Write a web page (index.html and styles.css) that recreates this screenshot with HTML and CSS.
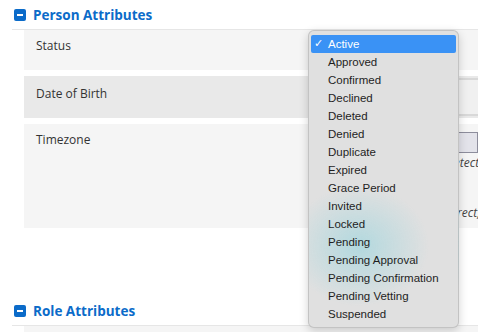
FILE: index.html
```html
<!DOCTYPE html>
<html>
<head>
    <title>Person Attributes</title>
    <link rel="stylesheet" href="styles.css">
</head>
<body>
    <div class="attr-section">
        <h2 class="section-title"><span class="toggle-icon"></span>Person Attributes</h2>
        <div class="attr-rows">
            <div class="attr-row">
                <div class="attr-label">Status</div>
                <div class="attr-value"></div>
            </div>
            <div class="attr-row dark">
                <div class="attr-label">Date of Birth</div>
                <div class="attr-value"><div class="date-input"></div></div>
            </div>
            <div class="attr-row tall">
                <div class="attr-label">Timezone</div>
                <div class="attr-value">
                    <div class="tz-input"></div>
                    <p class="help-text first">Your timezone will be detected automatically</p>
                    <p class="help-text second">If the value shown is incorrect, choose another</p>
                </div>
            </div>
        </div>
    </div>

    <div class="attr-section last">
        <h2 class="section-title"><span class="toggle-icon"></span>Role Attributes</h2>
        <div class="attr-rows">
            <div class="attr-row stub"></div>
        </div>
    </div>

    <!-- Native select popup, open over the Status field -->
    <ul class="select-menu">
        <li class="selected">Active</li>
        <li>Approved</li>
        <li>Confirmed</li>
        <li>Declined</li>
        <li>Deleted</li>
        <li>Denied</li>
        <li>Duplicate</li>
        <li>Expired</li>
        <li>Grace Period</li>
        <li>Invited</li>
        <li>Locked</li>
        <li>Pending</li>
        <li>Pending Approval</li>
        <li>Pending Confirmation</li>
        <li>Pending Vetting</li>
        <li>Suspended</li>
    </ul>
</body>
</html>
```

FILE: styles.css
```css
body {
    margin: 0;
    width: 478px;
    height: 332px;
    overflow: hidden;
    position: relative;
    background-color: white;
    color: #333;
    font-family: "Open Sans", sans-serif;
}

.attr-section {
    margin-bottom: 68px;
}

.attr-section.last {
    margin-bottom: 0;
}

.section-title {
    display: flex;
    align-items: center;
    gap: 7px;
    box-sizing: border-box;
    height: 30px;
    margin: 0 0 0 12px;
    padding: 1px 0 0 2px;
    border-bottom: 1px solid #e6e6e6;
    font-size: 13.5px;
    font-weight: 700;
    color: #0b6bc9;
}

.toggle-icon {
    position: relative;
    width: 12px;
    height: 12px;
    border-radius: 2px;
    background-color: #0b6bc9;
}

.toggle-icon::after {
    content: "";
    position: absolute;
    left: 3px;
    right: 3px;
    top: 5px;
    height: 2px;
    background-color: white;
}

.attr-rows {
    margin-left: 24px;
    display: flex;
    flex-direction: column;
    gap: 6px;
}

.attr-row {
    display: flex;
    height: 40px;
    background-color: #f5f5f5;
}

.attr-row.dark {
    height: 42px;
    background-color: #e9e9e9;
}

.attr-row.dark .attr-label {
    padding-top: 10px;
}

.attr-row.tall {
    height: 104px;
}

.attr-row.tall .attr-label {
    padding-top: 8px;
}

.attr-row.stub {
    height: 6px;
}

.attr-label {
    flex-shrink: 0;
    width: 274px;
    padding: 8px 0 0 12px;
    font-size: 12px;
    line-height: 16px;
}

.attr-value {
    flex: 1;
    min-width: 0;
    padding-left: 10px;
    white-space: nowrap;
    overflow: hidden;
}

.date-input {
    margin-top: 2px;
    height: 34px;
    border-top: 2px solid #d8d8d8;
    border-bottom: 2px solid #d8d8d8;
    background-color: #f0f0f0;
}

.tz-input {
    margin-top: 8px;
    height: 19px;
    border: 1px solid #8d8d9c;
    background-color: #e3e3ea;
}

.help-text {
    margin: 2px 0 0 0;
    font-size: 12px;
    line-height: 16px;
    font-style: italic;
    color: #444;
}

.help-text.first {
    padding-left: 11px;
}

.help-text.second {
    margin-top: 34px;
}

/* Open select popup */
.select-menu {
    position: absolute;
    left: 308px;
    top: 30px;
    width: 151px;
    height: 298px;
    margin: 0;
    padding: 4px 2px;
    box-sizing: border-box;
    list-style: none;
    border: 1px solid rgba(0,0,0,0.13);
    border-radius: 6px;
    background-color: #e0e0e0;
    background-image: radial-gradient(ellipse 70px 60px at 50px 215px, rgba(170,215,222,0.85), rgba(224,224,224,0));
    box-shadow: 0 3px 10px rgba(0,0,0,0.18);
    font-family: "Liberation Sans", Arial, sans-serif;
    font-size: 11.5px;
    color: #1e1e1e;
}

.select-menu li {
    position: relative;
    height: 18px;
    line-height: 18px;
    padding-left: 17px;
}

.select-menu li.selected {
    background-color: #3a92f5;
    color: white;
    border-radius: 2px;
}

.select-menu li.selected::before {
    content: "\2713";
    position: absolute;
    left: 3px;
    top: 0;
    font-family: "DejaVu Sans", sans-serif;
    font-size: 11px;
}
```
